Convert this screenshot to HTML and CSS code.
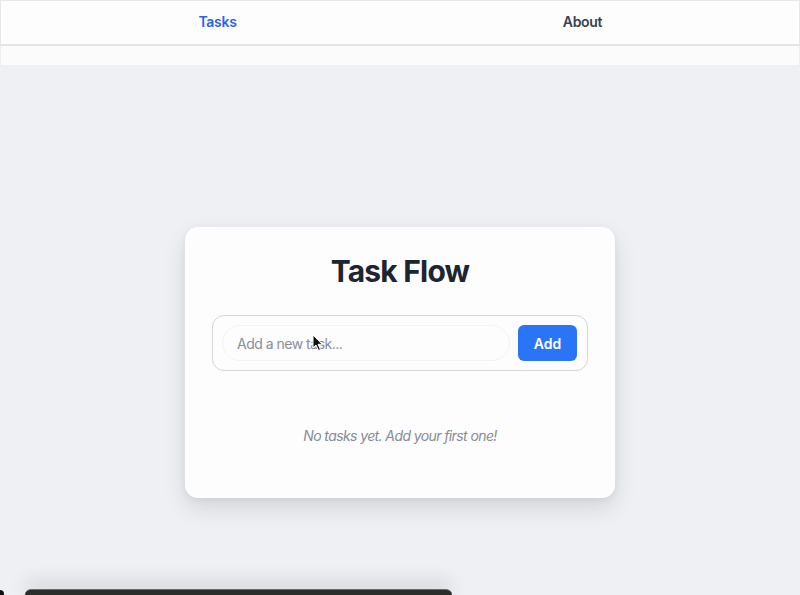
FILE: index.html
```html
<!DOCTYPE html>
<html lang="en">
<head>
<meta charset="utf-8">
<title>Task Flow</title>
<link rel="stylesheet" href="styles.css">
</head>
<body>
<div class="page">
  <header class="topbar">
    <nav class="nav">
      <a class="tab active">Tasks</a>
      <a class="tab">About</a>
    </nav>
  </header>
  <div class="strip"></div>
  <main class="main">
    <section class="card">
      <h1 class="title">Task Flow</h1>
      <form class="add-form">
        <input class="task-input" type="text" placeholder="Add a new task...">
        <button class="add-btn" type="button">Add</button>
      </form>
      <p class="empty">No tasks yet. Add your first one!</p>
    </section>
  </main>
</div>
<svg class="cursor" width="12" height="18" viewBox="0 0 12 18"><path d="M1 1 L1 14 L4 11 L6.5 16.5 L8.5 15.6 L6.1 10.3 L10.2 10.3 Z" fill="#111" stroke="#fff" stroke-width="1"/></svg>
<div class="dock"></div>
<div class="corner"></div>
</body>
</html>
```
FILE: styles.css
```css
* { box-sizing: border-box; }
html, body { margin: 0; padding: 0; }
body {
  font-family: Inter, "Noto Sans", "Liberation Sans", sans-serif;
  background: #eef0f4;
  width: 800px;
  height: 595px;
  overflow: hidden;
  position: relative;
}
.page { display: flex; flex-direction: column; height: 595px; }
.topbar {
  background: #fdfdfd;
  border: 1px solid #e6e7ea;
  border-bottom: 2px solid #e3e4e7;
  height: 46px;
}
.nav {
  display: flex;
  padding: 0 34px;
  height: 100%;
}
.tab {
  flex: 1;
  text-align: center;
  font-size: 14px;
  font-weight: 600;
  color: #374151;
  line-height: 42px;
  letter-spacing: -0.3px;
}
.tab.active { color: #2563eb; }
.strip {
  height: 19px;
  background: #fbfbfc;
  border-left: 1px solid #eceef1;
  border-right: 1px solid #eceef1;
}
.main {
  flex: 1;
  display: flex;
  justify-content: center;
  padding-top: 162px;
}
.card {
  width: 430px;
  height: 271px;
  background: #fdfdfe;
  border-radius: 13px;
  box-shadow: 0 10px 22px rgba(30, 35, 50, 0.13), 0 2px 6px rgba(30, 35, 50, 0.05);
  padding: 26px 27px 0;
  display: flex;
  flex-direction: column;
}
.title {
  margin: 0 0 26px;
  text-align: center;
  font-size: 30px;
  line-height: 36px;
  font-weight: 700;
  color: #1d2432;
  letter-spacing: -0.8px;
}
.add-form {
  display: flex;
  gap: 8px;
  height: 56px;
  padding: 9px 10px 9px 9px;
  border: 1px solid #d5d7dc;
  border-radius: 12px;
  margin: 0;
}
.task-input {
  flex: 1;
  height: 36px;
  border: 1px solid #f2f3f5;
  border-radius: 18px;
  background: #fdfdfe;
  padding: 0 14px;
  font-family: inherit;
  font-size: 14px;
  letter-spacing: -0.5px;
  color: #374151;
  outline: none;
}
.task-input::placeholder { color: #878d99; }
.add-btn {
  width: 59px;
  height: 36px;
  border: none;
  border-radius: 6px;
  background: #2a74f6;
  color: #fff;
  font-family: inherit;
  font-size: 14px;
  font-weight: 600;
}
.empty {
  margin: 55px 0 0;
  text-align: center;
  font-size: 14px;
  line-height: 20px;
  font-style: italic;
  letter-spacing: -0.6px;
  color: #858b98;
}
.cursor { position: absolute; left: 312px; top: 334px; }
.dock {
  position: absolute;
  left: 25px;
  top: 589px;
  width: 427px;
  height: 12px;
  background: #2b2d2b;
  border-top: 1px solid #6b6d6b;
  border-radius: 6px 6px 0 0;
  box-shadow: 0 -8px 18px rgba(0, 0, 0, 0.12);
}
.corner {
  position: absolute;
  left: 0;
  top: 590px;
  width: 4px;
  height: 5px;
  background: #111;
  border-top-right-radius: 4px;
}
```
